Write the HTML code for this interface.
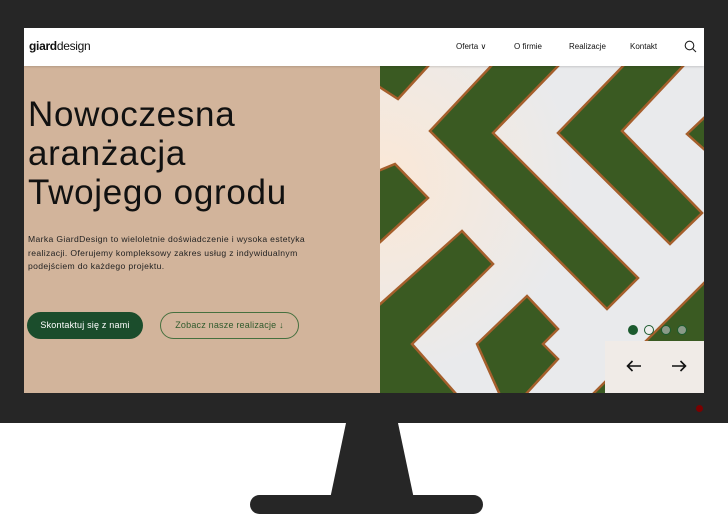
<!DOCTYPE html>
<html><head><meta charset="utf-8"><style>
*{margin:0;padding:0;box-sizing:border-box}
body{width:728px;height:514px;background:#fff;position:relative;overflow:hidden;font-family:"Liberation Sans",sans-serif}
.mon{position:absolute;left:0;top:0;width:728px;height:423px;background:#262626}
.scr{position:absolute;left:24px;top:28px;width:680px;height:365px;background:#d2b49b;overflow:hidden}
.hdr{position:absolute;left:0;top:0;width:680px;height:38px;background:#fff;box-shadow:0 1px 2px rgba(0,0,0,.15)}
.logo{position:absolute;left:5px;top:11px;font-size:12px;color:#111;letter-spacing:-.3px}
.nav{position:absolute;top:14px;font-size:8px;color:#111}
h1{position:absolute;left:4px;top:67px;font-size:35px;line-height:39px;font-weight:400;color:#111;letter-spacing:.7px}
.p{position:absolute;left:4px;top:205px;font-size:8.6px;line-height:13.5px;color:#222;letter-spacing:.35px}
.b1{position:absolute;left:3px;top:284px;width:116px;height:27px;border-radius:14px;background:#1b4d2c;color:#fff;font-size:9px;line-height:27px;text-align:center;letter-spacing:.2px}
.b2{position:absolute;left:136px;top:284px;width:139px;height:27px;border-radius:14px;border:1px solid #46703f;color:#2f5a2c;font-size:9px;line-height:25px;text-align:center;letter-spacing:.2px}
.img{position:absolute;left:356px;top:38px;width:324px;height:327px}
.dot{position:absolute;top:297px;width:10px;height:10px;border-radius:50%}
.pan{position:absolute;left:581px;top:313px;width:99px;height:52px;background:#f0ebe7}
</style></head><body>
<div class="mon"></div>
<div class="scr">
 <div class="img"><svg width="324" height="327" viewBox="0 0 324 327">
  <defs><radialGradient id="g" cx="0" cy="0.35" r="0.6"><stop offset="0" stop-color="#fbe8d6"/><stop offset="1" stop-color="#e9eaec"/></radialGradient></defs>
  <rect width="324" height="327" fill="url(#g)"/>
  <g fill="#3a5a22" stroke="#a55f2c" stroke-width="2.5" stroke-linejoin="miter">
   <polygon points="-2,-2 50,-2 18,33 -2,20"/>
   <polygon points="113,-2 50,65 227,243 258,212 113,67 180,-2"/>
   <polygon points="245,-2 178,67 290,178 322,147 242,65 305,-2"/>
   <polygon points="307,68 326,50 326,85"/>
   <polygon points="-2,105 15,98 48,132 -2,178"/>
   <polygon points="-2,240 82,165 113,198 32,278 77,329 -2,329"/>
   <polygon points="97,278 147,230 178,263 163,278 178,293 145,329 120,329"/>
   <polygon points="212,329 326,215 326,329"/>
  </g>
 </svg></div>
 <div class="hdr">
  <div class="logo"><b>giard</b>design</div>
  <div class="nav" style="left:432px">Oferta ∨</div>
  <div class="nav" style="left:490px">O firmie</div>
  <div class="nav" style="left:545px">Realizacje</div>
  <div class="nav" style="left:606px">Kontakt</div>
  <svg style="position:absolute;left:660px;top:12px" width="13" height="13" viewBox="0 0 13 13"><circle cx="5.5" cy="5.5" r="4.3" fill="none" stroke="#222" stroke-width="1.1"/><line x1="8.6" y1="8.6" x2="12" y2="12" stroke="#222" stroke-width="1.1"/></svg>
 </div>
 <h1>Nowoczesna<br>aranżacja<br>Twojego ogrodu</h1>
 <div class="p">Marka GiardDesign to wieloletnie doświadczenie i wysoka estetyka<br>realizacji. Oferujemy kompleksowy zakres usług z indywidualnym<br>podejściem do każdego projektu.</div>
 <div class="b1">Skontaktuj się z nami</div>
 <div class="b2">Zobacz nasze realizacje ↓</div>
 <div class="dot" style="left:604px;background:#1b5a2e"></div>
 <div class="dot" style="left:620px;border:1.5px solid #1b5a2e;background:#eee"></div>
 <div class="dot" style="left:637px;border:1.5px solid #1b5a2e;background:#8a9a88"></div>
 <div class="dot" style="left:653px;border:1.5px solid #1b5a2e;background:#8a9a88"></div>
 <div class="pan">
  <svg style="position:absolute;left:21px;top:19px" width="16" height="12" viewBox="0 0 16 12"><path d="M15 6H1.5M6.5 1L1.5 6l5 5" fill="none" stroke="#111" stroke-width="1.6"/></svg>
  <svg style="position:absolute;left:66px;top:19px" width="16" height="12" viewBox="0 0 16 12"><path d="M1 6h13.5M9.5 1l5 5-5 5" fill="none" stroke="#111" stroke-width="1.6"/></svg>
 </div>
</div>
<div style="position:absolute;left:696px;top:405px;width:7px;height:7px;border-radius:50%;background:#7a0000"></div>
<svg style="position:absolute;left:0;top:423px" width="728" height="91"><polygon points="346,0 398,0 414,76 330,76" fill="#262626"/><rect x="250" y="72" width="233" height="19" rx="9.5" fill="#262626"/></svg>
</body></html>
